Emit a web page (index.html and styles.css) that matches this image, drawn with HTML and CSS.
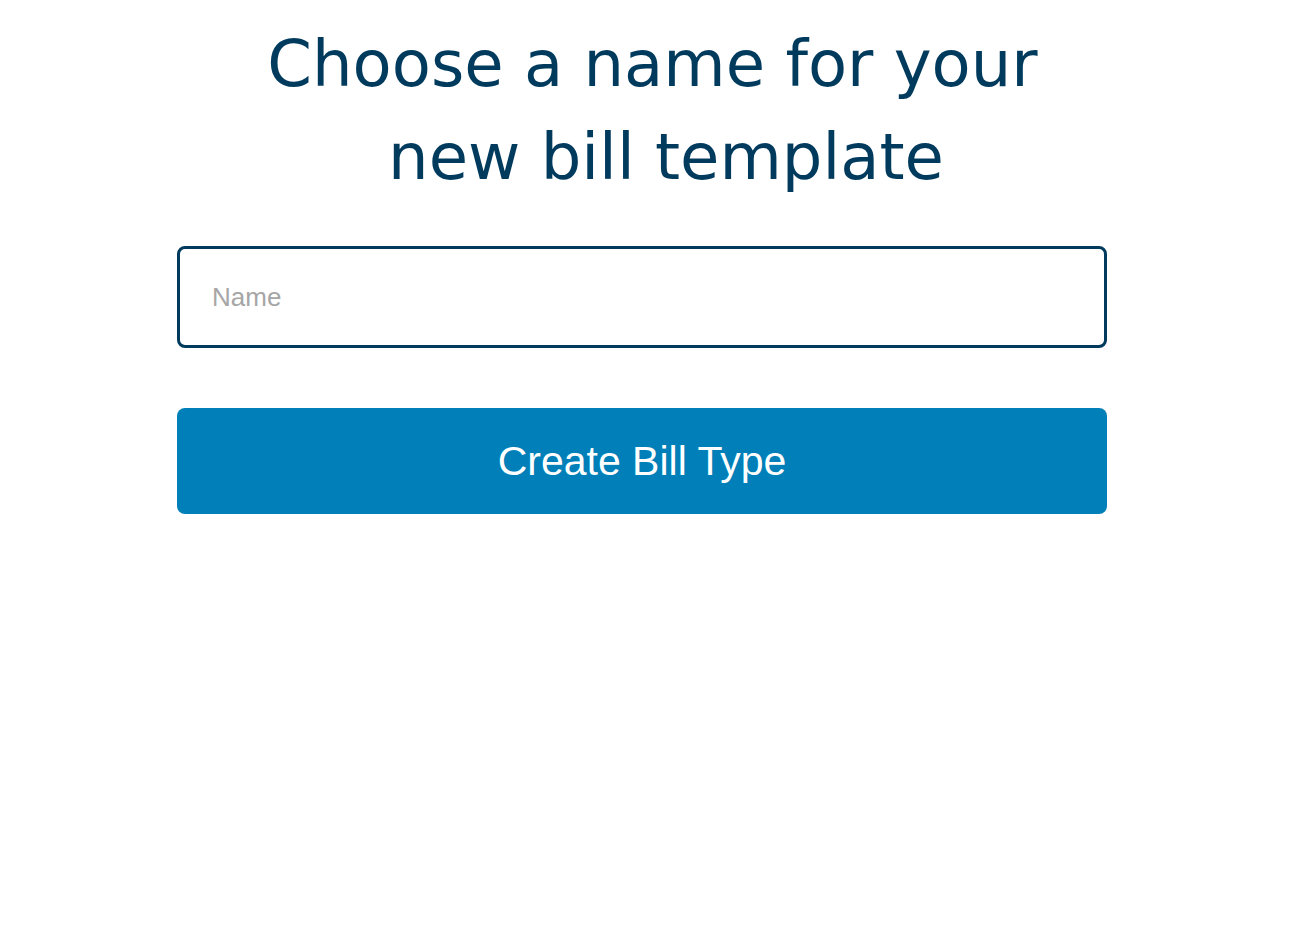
FILE: index.html
```html
<!DOCTYPE html>
<html lang="en">
<head>
<meta charset="utf-8">
<title>New bill template</title>
<link rel="stylesheet" href="styles.css">
</head>
<body>
<main class="page">
  <h1 class="title"><span class="title-line">Choose a name for your</span><span class="title-line title-line--second">new bill template</span></h1>
  <form class="form">
    <input class="name-input" type="text" placeholder="Name">
    <button class="submit" type="button">Create Bill Type</button>
  </form>
</main>
</body>
</html>
```
FILE: styles.css
```css
html, body {
  margin: 0;
  padding: 0;
  background: #ffffff;
}
.page {
  display: flex;
  flex-direction: column;
  align-items: center;
}
.title {
  margin: 18px 0 0 0;
  font-family: "DejaVu Sans", Verdana, sans-serif;
  font-weight: normal;
  font-size: 64px;
  line-height: 93px;
  color: #003a5d;
  text-align: center;
}
.title-line {
  display: block;
}
.title-line--second {
  padding-left: 27px;
}
.form {
  width: 930px;
  margin: 42px 21px 0 0;
  display: flex;
  flex-direction: column;
  gap: 60px;
}
.name-input {
  box-sizing: border-box;
  width: 100%;
  height: 102px;
  border: 3px solid #003a5d;
  border-radius: 8px;
  padding: 0 32px;
  font-family: "Liberation Sans", Arial, sans-serif;
  font-size: 26px;
  color: #333;
  outline: none;
}
.name-input::placeholder {
  color: #a6a6a6;
}
.submit {
  height: 106px;
  border: none;
  border-radius: 8px;
  background: #007fb8;
  color: #ffffff;
  font-family: "Liberation Sans", Arial, sans-serif;
  font-size: 41px;
  cursor: pointer;
}
```
